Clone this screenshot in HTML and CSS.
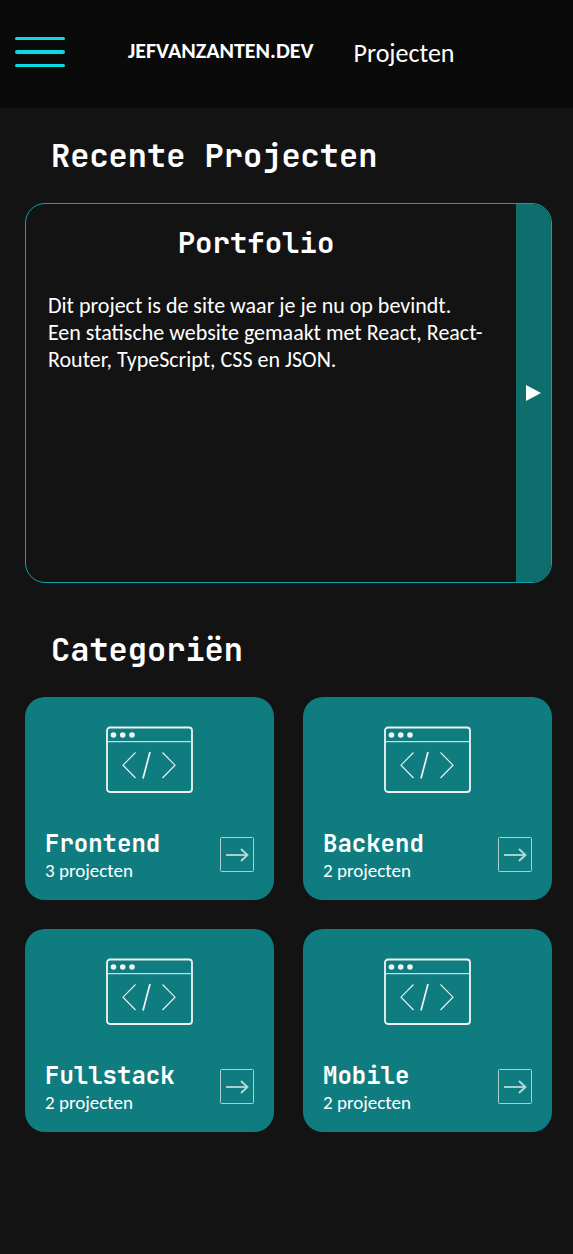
FILE: index.html
```html
<!DOCTYPE html>
<html lang="nl">
<head>
<meta charset="utf-8">
<meta name="viewport" content="width=device-width, initial-scale=1">
<title>JEFVANZANTEN.DEV</title>
<link rel="stylesheet" href="styles.css">
</head>
<body>
<svg class="sprite" aria-hidden="true">
  <symbol id="code-window" viewBox="0 0 88 68">
    <g fill="none" stroke="#f2f2f2">
      <rect x="1" y="1.500" width="85" height="64.500" rx="3" stroke-width="1.8"/>
      <path d="M1 15.700H86" stroke-width="1"/>
      <path d="M29.500 26.500 17 39.200 29.500 52M56.500 26.500 69 39.200 56.500 52" stroke-width="1.1"/>
      <path d="M44 26 37 52.500" stroke-width="1.7"/>
    </g>
    <g fill="#f2f2f2"><circle cx="7.500" cy="9" r="2.800"/><circle cx="16.700" cy="9" r="2.800"/><circle cx="26" cy="9" r="2.800"/></g>
  </symbol>
  <symbol id="arrow-box" viewBox="0 0 34 36">
    <rect x=".5" y=".5" width="33" height="34" rx="1" fill="none" stroke="#a9d1d2"/>
    <path d="M6 18H27" fill="none" stroke="#b9dadb" stroke-width="1.8"/>
    <path d="M21 12 27.500 18 21 24" fill="none" stroke="#b9dadb" stroke-width="1.8"/>
  </symbol>
</svg>
<header class="topbar">
  <button class="menu" type="button" aria-label="Menu"><span class="menu-line"></span><span class="menu-line menu-line-mid"></span><span class="menu-line"></span></button>
  <a class="brand" href="#">JEFVANZANTEN.DEV</a>
  <a class="nav-link" href="#projecten">Projecten</a>
</header>
<main class="content">
  <h1 class="section-title">Recente Projecten</h1>
  <article class="recent">
    <div class="recent-body">
      <h2 class="recent-title">Portfolio</h2>
      <p class="recent-text">Dit project is de site waar je je nu op bevindt.<br>Een statische website gemaakt met React, React-Router, TypeScript, CSS en JSON.</p>
    </div>
    <button class="next" type="button" aria-label="Volgende"><svg width="16" height="16" viewBox="0 0 16 16"><path d="M0 0 15 8 0 16Z" fill="#fff"/></svg></button>
  </article>
  <h1 class="section-title">Categoriën</h1>
  <div class="categories" id="projecten">
    <a class="card" href="#frontend">
      <svg class="card-icon"><use href="#code-window"/></svg>
      <div class="card-foot"><div><h2 class="card-title">Frontend</h2><p class="card-count">3 projecten</p></div><svg class="card-arrow"><use href="#arrow-box"/></svg></div>
    </a>
    <a class="card" href="#backend">
      <svg class="card-icon"><use href="#code-window"/></svg>
      <div class="card-foot"><div><h2 class="card-title">Backend</h2><p class="card-count">2 projecten</p></div><svg class="card-arrow"><use href="#arrow-box"/></svg></div>
    </a>
    <a class="card" href="#fullstack">
      <svg class="card-icon"><use href="#code-window"/></svg>
      <div class="card-foot"><div><h2 class="card-title">Fullstack</h2><p class="card-count">2 projecten</p></div><svg class="card-arrow"><use href="#arrow-box"/></svg></div>
    </a>
    <a class="card" href="#mobile">
      <svg class="card-icon"><use href="#code-window"/></svg>
      <div class="card-foot"><div><h2 class="card-title">Mobile</h2><p class="card-count">2 projecten</p></div><svg class="card-arrow"><use href="#arrow-box"/></svg></div>
    </a>
  </div>
</main>
</body>
</html>
```
FILE: styles.css
```css
* { box-sizing: border-box; margin: 0; padding: 0; }
body {
  min-height: 100vh;
  background: #131313;
  color: #fff;
  font-family: Calibri, Carlito, Lato, sans-serif;
}
a { color: inherit; text-decoration: none; }
button { border: 0; cursor: pointer; }
.sprite { display: none; }
.topbar {
  display: flex;
  align-items: center;
  height: 108px;
  padding: 0 15px 4px;
  background: #0a0a0a;
}
.menu {
  display: flex;
  flex-direction: column;
  gap: 10px;
  width: 50px;
  background: none;
}
.menu-line { height: 3px; border-radius: 2px; background: #0bd9e3; }
.menu-line-mid { height: 4px; }
.brand { margin-left: 63px; padding-bottom: 2px; font-size: 22px; font-weight: 700; line-height: 28px; }
.nav-link { margin-left: 40px; padding-top: 2px; font-size: 26px; line-height: 28px; }
.content { padding: 24px 21px 24px 25px; }
.section-title {
  padding-left: 26px;
  font-family: "JetBrains Mono", "DejaVu Sans Mono", monospace;
  font-size: 32px;
  font-weight: 700;
  line-height: 48px;
}
.recent {
  display: flex;
  min-height: 380px;
  margin: 23px 0 43px;
  border: 1px solid #10a3a5;
  border-radius: 20px;
  overflow: hidden;
}
.recent-body { flex: 1; padding: 19px 28px 19px 22px; }
.recent-title {
  margin-bottom: 29px;
  padding-right: 24px;
  text-align: center;
  font-family: "JetBrains Mono", "DejaVu Sans Mono", monospace;
  font-size: 29px;
  line-height: 40px;
}
.recent-text { font-size: 22px; line-height: 27px; }
.next {
  display: flex;
  align-items: center;
  justify-content: center;
  width: 35px;
  background: #106d6e;
}
.categories {
  display: grid;
  grid-template-columns: 1fr 1fr;
  gap: 29px;
  margin-top: 23px;
}
.card {
  display: flex;
  flex-direction: column;
  min-height: 203px;
  padding: 29px 20px 18px;
  border-radius: 20px;
  background: #0f7d80;
}
.card-icon { width: 88px; height: 68px; align-self: center; }
.card-foot {
  display: flex;
  align-items: center;
  justify-content: space-between;
  margin-top: auto;
}
.card-title {
  font-family: "JetBrains Mono", "DejaVu Sans Mono", monospace;
  font-size: 24px;
  line-height: 32px;
}
.card-count { font-size: 19px; line-height: 22px; }
.card-arrow { width: 34px; height: 36px; }
```
